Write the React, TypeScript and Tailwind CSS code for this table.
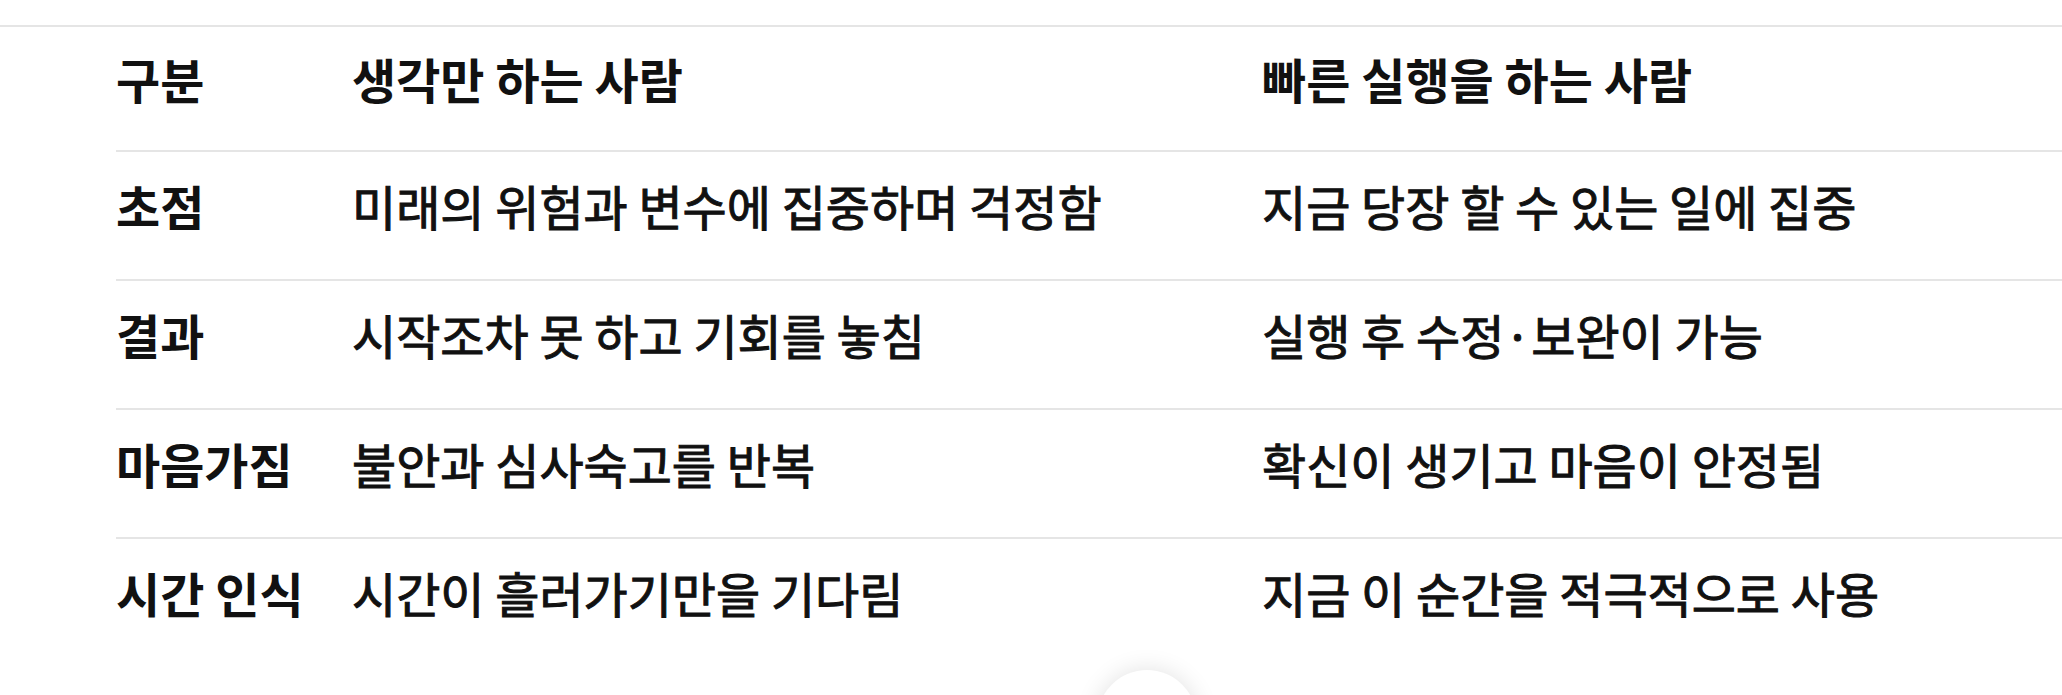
import React from "react";

const rows: [string, string, string][] = [
  ["초점", "미래의 위험과 변수에 집중하며 걱정함", "지금 당장 할 수 있는 일에 집중"],
  ["결과", "시작조차 못 하고 기회를 놓침", "실행 후 수정·보완이 가능"],
  ["마음가짐", "불안과 심사숙고를 반복", "확신이 생기고 마음이 안정됨"],
  ["시간 인식", "시간이 흘러가기만을 기다림", "지금 이 순간을 적극적으로 사용"],
];

export default function App() {
  return (
    <div
      className="relative w-[2062px] h-[695px] overflow-hidden bg-white text-[#111111]"
      style={{ fontFamily: '"Noto Sans CJK KR", "Noto Sans", sans-serif' }}
    >
      <div className="h-[25px]" />
      <div className="border-t-2 border-[#e5e5e5]">
        <div className="ml-[116px] w-[2062px]">
          <div className="grid grid-cols-[236px_910px_1fr] items-center h-[123px] pb-[22px] text-[48px] font-bold leading-none">
            <div>구분</div>
            <div>생각만 하는 사람</div>
            <div>빠른 실행을 하는 사람</div>
          </div>
          {rows.map((r, i) => (
            <div
              key={i}
              className="grid grid-cols-[236px_910px_1fr] items-center h-[129px] pb-[22px] border-t-2 border-[#e5e5e5] text-[48px] leading-none"
            >
              <div className="font-bold">{r[0]}</div>
              <div className="font-normal [-webkit-text-stroke:1px_#111111]">{r[1]}</div>
              <div className="font-normal [-webkit-text-stroke:1px_#111111]">{r[2]}</div>
            </div>
          ))}
        </div>
      </div>
      <div className="absolute left-[1097px] top-[670px] w-[100px] h-[100px] rounded-full bg-white shadow-[0_0_24px_rgba(0,0,0,0.12)]" />
    </div>
  );
}
